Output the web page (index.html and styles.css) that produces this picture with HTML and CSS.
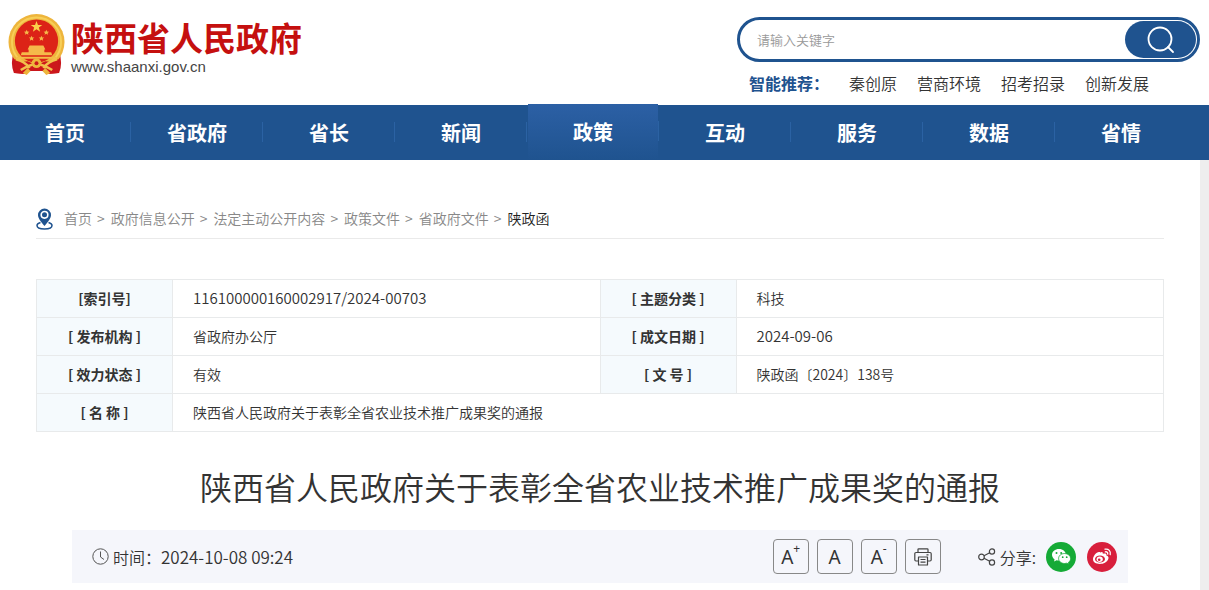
FILE: index.html
```html
<!DOCTYPE html>
<html lang="zh-CN">
<head>
    <meta charset="UTF-8">
    <meta name="viewport" content="width=device-width, initial-scale=1.0">
    <title>陕西省人民政府关于表彰全省农业技术推广成果奖的通报</title>
    <link rel="stylesheet" href="styles.css">
</head>
<body>

<!-- Header -->
<header class="header">
    <a href="#" class="logo">
        <svg class="emblem" viewBox="0 0 58 62" aria-hidden="true">
            <path d="M6 38 L52 38 Q56 50 52 60 L40 61 L36 58 L22 58 L18 61 L6 60 Q2 50 6 38Z" fill="#c9161c"/>
            <circle cx="29" cy="28.500" r="28.500" fill="#eeb53c"/>
            <circle cx="29" cy="28.500" r="25" fill="none" stroke="#f7cf58" stroke-width="2"/>
            <circle cx="29" cy="27.500" r="22" fill="#dc2317"/>
            <path d="M7 46 Q13 49 20 48 L29 52 L38 48 Q45 49 51 46 L51 60 L40 61 L36 57 L22 57 L18 61 L7 60Z" fill="#cc171b"/>
            <path d="M29 7l1.500 4.100h4.400l-3.500 2.700 1.300 4.200-3.700-2.500-3.700 2.500 1.300-4.200-3.500-2.700h4.400z" fill="#fbd04a"/>
            <g fill="#f5b94a">
                <path id="star" d="M19 16l.8 1.800 2 .1-1.500 1.300.5 2-1.800-1.100-1.800 1.100.5-2-1.500-1.300 2-.1z"/>
                <use href="#star" x="20"/>
                <use href="#star" x="5" y="6"/>
                <use href="#star" x="15" y="6"/>
                <path d="M22 32h14l2 4H20zM21 36h16v3H21zM14 39h30l1 3H13z"/>
            </g>
            <path d="M9 43.500h40v2H9z" fill="#f3bd48"/>
            <path d="M8 46Q17 48 22 55M50 46Q41 48 36 55M13 57Q22 51 29 51T45 57" fill="none" stroke="#f2c14c" stroke-width="2.500"/>
            <circle cx="29" cy="50" r="5" fill="#eeb53c"/>
            <circle cx="29" cy="50" r="2" fill="#cc171b"/>
            <path d="M15 60l5-5 3 3-4 4zM43 60l-5-5-3 3 4 4z" fill="#eeb53c"/>
        </svg>
        <span class="logo-text">
            <span class="logo-name">陕西省人民政府</span>
            <span class="logo-url">www.shaanxi.gov.cn</span>
        </span>
    </a>

    <div class="search-area">
        <form class="search-box">
            <input type="text" class="search-input" placeholder="请输入关键字" aria-label="请输入关键字">
            <button type="button" class="search-button" aria-label="搜索">
                <svg width="28" height="28" viewBox="0 0 28 28" fill="none" stroke="#fff" stroke-width="1.800" stroke-linecap="round">
                    <circle cx="13" cy="13" r="11.500"/>
                    <path d="M21 21l5 5"/>
                </svg>
            </button>
        </form>
        <div class="hot-words">
            <strong>智能推荐：</strong>
            <a href="#">秦创原</a>
            <a href="#">营商环境</a>
            <a href="#">招考招录</a>
            <a href="#">创新发展</a>
        </div>
    </div>
</header>

<!-- Main Navigation -->
<nav class="nav">
    <a href="#">首页</a>
    <a href="#">省政府</a>
    <a href="#">省长</a>
    <a href="#">新闻</a>
    <a href="#" class="active">政策</a>
    <a href="#">互动</a>
    <a href="#">服务</a>
    <a href="#">数据</a>
    <a href="#">省情</a>
</nav>

<main class="content">
    <!-- Breadcrumb -->
    <div class="breadcrumb">
        <svg width="17" height="22" viewBox="0 0 17 22" fill="none" stroke="#1f538f" aria-hidden="true">
            <path d="M4.500 14.500C2 15.200 1 16.200 1 17.500 1 19.500 4 21 8.500 21S16 19.500 16 17.500c0-1.300-1-2.300-3.500-3" stroke-width="1.500"/>
            <path d="M8.500 18C5 13.500 2 10.500 2 7a6.500 6.500 0 0 1 13 0C15 10.500 12 13.500 8.500 18z" fill="#1f538f" stroke="none"/>
            <circle cx="8.500" cy="6.800" r="3.300" fill="#1f538f" stroke="#fff" stroke-width="1.600"/>
        </svg>
        <a href="#">首页</a><span>&gt;</span>
        <a href="#">政府信息公开</a><span>&gt;</span>
        <a href="#">法定主动公开内容</a><span>&gt;</span>
        <a href="#">政策文件</a><span>&gt;</span>
        <a href="#">省政府文件</a><span>&gt;</span>
        <a href="#" class="current">陕政函</a>
    </div>

    <!-- Document Info -->
    <table class="info-table">
        <tr>
            <th scope="row">[索引号]</th>
            <td class="number">116100000160002917/2024-00703</td>
            <th scope="row">[ 主题分类 ]</th>
            <td>科技</td>
        </tr>
        <tr>
            <th scope="row">[ 发布机构 ]</th>
            <td>省政府办公厅</td>
            <th scope="row">[ 成文日期 ]</th>
            <td class="number">2024-09-06</td>
        </tr>
        <tr>
            <th scope="row">[ 效力状态 ]</th>
            <td>有效</td>
            <th scope="row">[ 文 号 ]</th>
            <td>陕政函〔2024〕138号</td>
        </tr>
        <tr>
            <th scope="row">[ 名 称 ]</th>
            <td colspan="3">陕西省人民政府关于表彰全省农业技术推广成果奖的通报</td>
        </tr>
    </table>

    <h1 class="title">陕西省人民政府关于表彰全省农业技术推广成果奖的通报</h1>

    <!-- Time and Tools -->
    <div class="toolbar">
        <div class="time">
            <svg width="17" height="17" viewBox="0 0 17 17" fill="none" stroke="#555" aria-hidden="true">
                <circle cx="8.500" cy="8.500" r="7.700"/>
                <path d="M8.500 3.500v5.500l3.500 2.500"/>
            </svg>
            <span>时间：</span>
            <time datetime="2024-10-08T09:24">2024-10-08 09:24</time>
        </div>
        <div class="tools">
            <button type="button">A<sup>+</sup></button>
            <button type="button">A</button>
            <button type="button">A<sup>-</sup></button>
            <button type="button" aria-label="打印">
                <svg width="18" height="18" viewBox="0 0 18 18" fill="none" stroke="#444" stroke-width="1.200" stroke-linejoin="round">
                    <path d="M4 4.500V1.500q0-.7.700-.7h8.600q.7 0 .7.700v3"/>
                    <path d="M4.500 13H2q-1.200 0-1.200-1.200V5.700Q.8 4.500 2 4.500h14q1.200 0 1.200 1.200v6.100Q17.200 13 16 13h-2.500"/>
                    <path d="M4.500 9h9v8h-9zM6.500 11.500h5M6.500 14.200h5M12.500 6.800h2"/>
                </svg>
            </button>
        </div>
        <div class="share">
            <svg width="18" height="18" viewBox="0 0 18 18" fill="none" stroke="#444" stroke-width="1.200" aria-hidden="true">
                <circle cx="3.500" cy="9" r="2.800"/>
                <circle cx="14" cy="3.500" r="2.600"/>
                <circle cx="14" cy="14.500" r="2.600"/>
                <path d="M6 7.700l5.700-3M6 10.300l5.700 3"/>
            </svg>
            <span>分享:</span>
            <a href="#" class="share-icon wechat" aria-label="微信">
                <svg width="30" height="30" viewBox="0 0 30 30">
                    <path d="M13 7C9 7 6 9.600 6 12.800c0 1.900 1 3.500 2.600 4.600L8 19.500l2.600-1.200c.8.200 1.600.3 2.400.3 4 0 7-2.500 7-5.700S17 7 13 7z" fill="#fff"/>
                    <path d="M18.600 11.500c3.400 0 6 2.200 6 5 0 1.600-.8 3-2.200 3.900l.5 1.800-2.100-1c-.7.200-1.400.3-2.200.3-3.400 0-6-2.200-6-5s2.600-5 6-5z" fill="#fff" stroke="#15aa36" stroke-width=".8"/>
                    <g fill="#15aa36">
                        <circle cx="10.500" cy="11" r="1"/>
                        <circle cx="15.200" cy="11" r="1"/>
                        <circle cx="16.700" cy="15.200" r=".9"/>
                        <circle cx="20.700" cy="15.200" r=".9"/>
                    </g>
                </svg>
            </a>
            <a href="#" class="share-icon weibo" aria-label="微博">
                <svg width="30" height="30" viewBox="0 0 30 30" fill="none">
                    <path d="M13.500 10.500c1.200-.9 2.500-.7 2.300 1.300 2-.7 4-.7 3.600 1.600 2 .6 2.600 2 1.800 3.900-1.200 3-4.700 4.700-8.400 4.700-4 0-6.800-1.900-6.800-4.700 0-3.500 4.400-8.900 7.500-6.800z" fill="#fff"/>
                    <ellipse cx="13" cy="17" rx="5" ry="3.600" fill="#d81f3c"/>
                    <ellipse cx="12.700" cy="17.200" rx="3.100" ry="2.700" fill="#fff"/>
                    <circle cx="12.200" cy="17.700" r="1.300" fill="#d81f3c"/>
                    <path d="M18 7.200c3.600-.7 6 2 5.200 5.300M18.300 9.800c1.700-.3 2.700.7 2.400 2.200" stroke="#fff" stroke-width="1.300" stroke-linecap="round"/>
                </svg>
            </a>
        </div>
    </div>
</main>

</body>
</html>
```
FILE: styles.css
```css
* {
    box-sizing: border-box;
}
body {
    font-family: "Noto Sans CJK SC", "Noto Sans", sans-serif;
    font-size: 14px;
    font-weight: 350;
    color: #333;
    background-color: #eee;
    margin: 0;
}
a {
    color: inherit;
    text-decoration: none;
}
button, input {
    font-family: inherit;
    font-weight: inherit;
}
/* Header */
.header {
    display: flex;
    justify-content: space-between;
    align-items: flex-start;
    height: 105px;
    padding: 14px 9px 0 8px;
    background-color: #fff;
}
.logo {
    display: flex;
    gap: 6px;
}
.emblem {
    width: 57px;
    height: 61px;
}
.logo-text {
    display: flex;
    flex-direction: column;
}
.logo-name {
    font-size: 33px;
    font-weight: bold;
    line-height: 46px;
    color: #c5100f;
}
.logo-url {
    font-family: "Liberation Sans", Arial, sans-serif;
    font-size: 15px;
    line-height: 14px;
    color: #444;
}
.search-area {
    width: 463px;
    padding-top: 3px;
}
.search-box {
    display: flex;
    height: 45px;
    border: 3px solid #1f538f;
    border-radius: 23px;
    padding: 1px;
}
.search-input {
    flex: 1;
    min-width: 0;
    border: none;
    outline: none;
    background: none;
    padding: 0 16px;
    font-size: 13px;
}
.search-input::placeholder {
    color: #999;
}
.search-button {
    display: flex;
    justify-content: center;
    align-items: center;
    width: 71px;
    border: none;
    border-radius: 19px;
    background-color: #1f538f;
    cursor: pointer;
}
.hot-words {
    display: flex;
    gap: 20px;
    padding: 9px 12px 0;
    font-size: 16px;
    line-height: 24px;
}
.hot-words strong {
    color: #1f538f;
}
/* Navigation */
.nav {
    display: grid;
    grid-template-columns: repeat(9, 1fr);
    gap: 2px;
    height: 55px;
    padding-right: 23px;
    background-color: #1f538f;
}
.nav a {
    position: relative;
    color: white;
    font-size: 20px;
    font-weight: bold;
    line-height: 55px;
    text-align: center;
}
.nav a:not(:last-child)::after {
    content: "";
    position: absolute;
    right: -1px;
    top: 17px;
    width: 1px;
    height: 20px;
    background-color: #2b62a3;
}
.nav a.active {
    margin-top: -1px;
    background: linear-gradient(#2c60a5, #1f538f);
}
/* Content */
.content {
    min-height: calc(100vh - 160px);
    margin-right: 9px;
    padding: 46px 36px 7px;
    background-color: white;
}
.breadcrumb {
    display: flex;
    align-items: center;
    height: 33px;
    padding-bottom: 6px;
    border-bottom: 1px solid #eaeaea;
    line-height: 20px;
    color: #888;
}
.breadcrumb svg {
    margin-right: 11px;
}
.breadcrumb a, .breadcrumb span {
    padding-bottom: 2px;
}
.breadcrumb span {
    padding-left: 5px;
    padding-right: 6px;
}
.breadcrumb .current {
    color: #222;
}
.info-table {
    width: 100%;
    margin-top: 40px;
    border-collapse: collapse;
    table-layout: fixed;
}
.info-table th, .info-table td {
    height: 38px;
    padding: 0 0 2px;
    border: 1px solid #e8eaeb;
    line-height: 20px;
}
.info-table th {
    width: 136px;
    background-color: #f5fafd;
    text-align: center;
}
.info-table td {
    padding-left: 20px;
}
.info-table .number {
    font-size: 15px;
}
.title {
    margin: 30px 0 20px;
    font-size: 32px;
    font-weight: 350;
    line-height: 48px;
    text-align: center;
}
/* Toolbar */
.toolbar {
    display: flex;
    align-items: center;
    height: 53px;
    margin: 0 36px;
    padding: 0 11px 0 20px;
    background-color: #f5f6fb;
    font-size: 16px;
}
.time {
    display: flex;
    align-items: center;
    gap: 4px;
    margin-right: auto;
}
.time time {
    font-size: 17px;
}
.time span {
    margin-right: -4px;
}
.tools {
    display: flex;
    gap: 8px;
}
.tools button {
    display: flex;
    justify-content: center;
    align-items: center;
    width: 36px;
    height: 35px;
    padding: 0;
    border: 1px solid #888;
    border-radius: 4px;
    background: none;
    color: #333;
    font-family: "Noto Sans", sans-serif;
    font-size: 19px;
    font-weight: 400;
    cursor: pointer;
}
.tools sup {
    align-self: flex-start;
    font-size: 12px;
    line-height: 18px;
}
.share {
    display: flex;
    align-items: center;
    margin-left: 37px;
}
.share span {
    margin: 0 10px 0 4px;
}
.share-icon {
    width: 30px;
    height: 30px;
    border-radius: 50%;
}
.share-icon + .share-icon {
    margin-left: 11px;
}
.wechat {
    background-color: #15aa36;
}
.weibo {
    background-color: #d81f3c;
}
```
